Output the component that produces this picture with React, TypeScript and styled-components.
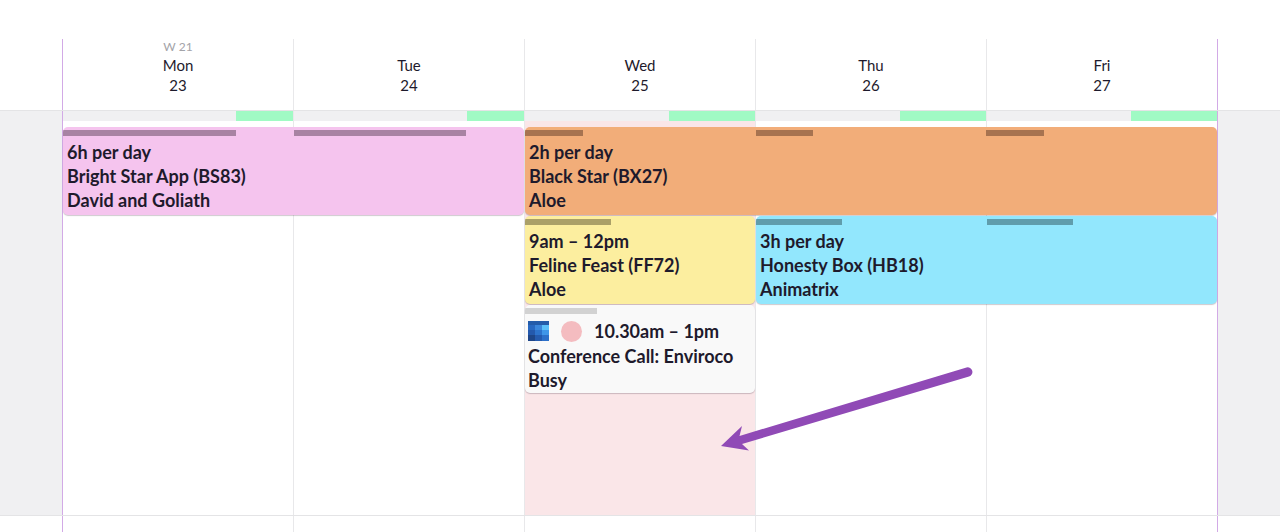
import React from "react";
import styled, { createGlobalStyle } from "styled-components";

const GlobalStyle = createGlobalStyle`
  *, *::before, *::after { box-sizing: border-box; }
  body {
    margin: 0;
    background: #ffffff;
    color: #1e1a2c;
    font-family: Lato, "Liberation Sans", sans-serif;
  }
`;

const HOURS_PER_DAY = 8;

const Page = styled.main`
  display: flex;
  flex-direction: column;
  min-height: 100vh;
  padding-top: 39px;
  overflow: hidden;
`;

const WeekGrid = styled.div`
  display: grid;
  grid-template-columns: 62px repeat(5, minmax(0, 1fr)) 63px;
`;

const HeaderRow = styled(WeekGrid)`
  height: 72px;
  border-bottom: 1px solid #e4e4e6;
`;

const BodyRow = styled(WeekGrid)`
  position: relative;
  grid-template-rows: 10px 4px repeat(3, 88px) minmax(121px, 1fr);
  row-gap: 1px;
  border-bottom: 1px solid #e4e4e6;
`;

const NextRow = styled(WeekGrid)`
  flex: 1;
`;

const Gutter = styled.div<{ $shaded?: boolean; $end?: boolean }>`
  grid-row: 1 / -1;
  grid-column: ${(p) => (p.$end ? 7 : 1)};
  background: ${(p) => (p.$shaded ? "#f0f0f2" : "transparent")};
  border-left: ${(p) => (p.$end ? "1px solid #d2aae6" : "none")};
`;

const DayColumn = styled.div<{ $day: number; $highlighted?: boolean }>`
  grid-row: 1 / -1;
  grid-column: ${(p) => p.$day + 2};
  border-left: 1px solid ${(p) => (p.$day === 0 ? "#d2aae6" : "#e8e8ea")};
  background: ${(p) => (p.$highlighted ? "#fae6e8" : "transparent")};
`;

const HeaderCell = styled(DayColumn)`
  display: flex;
  flex-direction: column;
  align-items: center;
  justify-content: flex-end;
  padding-bottom: 15px;
  font-size: 15px;
  line-height: 20px;
`;

const WeekLabel = styled.span`
  color: #a3a3a8;
  font-size: 12px;
  line-height: 16px;
`;

const Capacity = styled.div`
  display: flex;
  justify-content: flex-end;
  height: 10px;
  background: #f0f0f2;
`;

const FreeTime = styled.div`
  background: #a0fac4;
`;

const Card = styled.article<{ $row: number; $start: number; $span: number; $color: string }>`
  grid-row: ${(p) => p.$row + 3};
  grid-column: ${(p) => p.$start + 2} / span ${(p) => p.$span};
  z-index: 1;
  margin-left: 1px;
  padding-top: 3px;
  overflow: hidden;
  border-radius: 5px;
  background: ${(p) => p.$color};
  box-shadow: 0 1px 1px rgba(60, 40, 60, 0.25);
`;

const BarTrack = styled.div<{ $span: number }>`
  display: grid;
  grid-template-columns: repeat(${(p) => p.$span}, minmax(0, 1fr));
  height: 6px;
`;

const HoursBar = styled.div<{ $color: string }>`
  background: ${(p) => p.$color};
`;

const CardText = styled.div<{ $event?: boolean }>`
  padding: 4px 0 0 ${(p) => (p.$event ? 3 : 4)}px;
  font-size: 18px;
  font-weight: 700;
  line-height: 24px;
  white-space: nowrap;
`;

const EventTime = styled.div`
  display: flex;
  align-items: center;
  gap: 12px;
  height: 26px;
`;

const StatusDot = styled.span`
  width: 21px;
  height: 21px;
  border-radius: 50%;
  background: #f4bcc0;
`;

const Pointer = styled.svg`
  position: absolute;
  z-index: 2;
  grid-column: 4 / 7;
  grid-row: 1 / -1;
  left: 196px;
  top: 254px;
`;

const CalendarIcon = () => (
  <svg width="21" height="20" viewBox="0 0 21 20" aria-hidden="true">
    <path fill="#2a68bd" d="M0 0h21v20H0z" />
    <path fill="#245caa" d="M0 0h21v4H0z" />
    <path fill="#3b87dc" d="M7 4h7v5H7z" />
    <path fill="#5cc0fa" d="M14 4h7v5h-7z" />
    <path fill="#2869c2" d="M0 4h7v5H0z" />
    <path fill="#2459ad" d="M0 9h7v5H0z" />
    <path fill="#2d73cc" d="M7 9h7v5H7z" />
    <path fill="#4096e8" d="M14 9h7v5h-7z" />
    <path fill="#1e4689" d="M0 14h7v6H0z" />
    <path fill="#255baf" d="M7 14h7v6H7z" />
    <path fill="#2d70c9" d="M14 14h7v6h-7z" />
  </svg>
);

const days = [
  { name: "Mon", date: 23, week: "W 21", free: 2 },
  { name: "Tue", date: 24, free: 2 },
  { name: "Wed", date: 25, free: 3, highlighted: true },
  { name: "Thu", date: 26, free: 3 },
  { name: "Fri", date: 27, free: 3 },
];

interface Booking {
  row: number;
  start: number;
  span: number;
  hours: number;
  color: string;
  bar: string;
  time: string;
  title: string;
  client: string;
  event?: boolean;
}

const bookings: Booking[] = [
  { row: 0, start: 0, span: 2, hours: 6, color: "#f5c4ee", bar: "#a883a3", time: "6h per day", title: "Bright Star App (BS83)", client: "David and Goliath" },
  { row: 0, start: 2, span: 3, hours: 2, color: "#f2ad79", bar: "#a77350", time: "2h per day", title: "Black Star (BX27)", client: "Aloe" },
  { row: 1, start: 2, span: 1, hours: 3, color: "#fcee9f", bar: "#aba068", time: "9am – 12pm", title: "Feline Feast (FF72)", client: "Aloe" },
  { row: 1, start: 3, span: 2, hours: 3, color: "#92e7fd", bar: "#609dac", time: "3h per day", title: "Honesty Box (HB18)", client: "Animatrix" },
  { row: 2, start: 2, span: 1, hours: 2.5, color: "#f9f9f9", bar: "#d2d2d2", time: "10.30am – 1pm", title: "Conference Call: Enviroco", client: "Busy", event: true },
];

const share = (hours: number) => ({ width: `${(hours / HOURS_PER_DAY) * 100}%` });

const BookingCard = ({ booking: b }: { booking: Booking }) => (
  <Card $row={b.row} $start={b.start} $span={b.span} $color={b.color}>
    <BarTrack $span={b.span}>
      {Array.from({ length: b.span }, (_, i) => (
        <HoursBar key={i} $color={b.bar} style={share(b.hours)} />
      ))}
    </BarTrack>
    <CardText $event={b.event}>
      {b.event ? (
        <EventTime>
          <CalendarIcon />
          <StatusDot />
          <span>{b.time}</span>
        </EventTime>
      ) : (
        <div>{b.time}</div>
      )}
      <div>{b.title}</div>
      <div>{b.client}</div>
    </CardText>
  </Card>
);

export default function App() {
  return (
    <>
      <GlobalStyle />
      <Page>
        <HeaderRow>
          <Gutter />
          {days.map((day, i) => (
            <HeaderCell key={day.date} $day={i}>
              {day.week && <WeekLabel>{day.week}</WeekLabel>}
              <span>{day.name}</span>
              <span>{day.date}</span>
            </HeaderCell>
          ))}
          <Gutter $end />
        </HeaderRow>
        <BodyRow>
          <Gutter $shaded />
          {days.map((day, i) => (
            <DayColumn key={day.date} $day={i} $highlighted={day.highlighted}>
              <Capacity>
                <FreeTime style={share(day.free)} />
              </Capacity>
            </DayColumn>
          ))}
          <Gutter $shaded $end />
          {bookings.map((b) => (
            <BookingCard key={b.title} booking={b} />
          ))}
          <Pointer width="256" height="90" viewBox="0 0 256 90" aria-hidden="true">
            <path
              d="M1 81L22 61L19.500 71L246.500 2.500A4.600 4.600 0 0 1 249 11.500L22 79L29 85.500Z"
              fill="#904ab6"
            />
          </Pointer>
        </BodyRow>
        <NextRow>
          <Gutter />
          {days.map((day, i) => (
            <DayColumn key={day.date} $day={i} />
          ))}
          <Gutter $end />
        </NextRow>
      </Page>
    </>
  );
}
